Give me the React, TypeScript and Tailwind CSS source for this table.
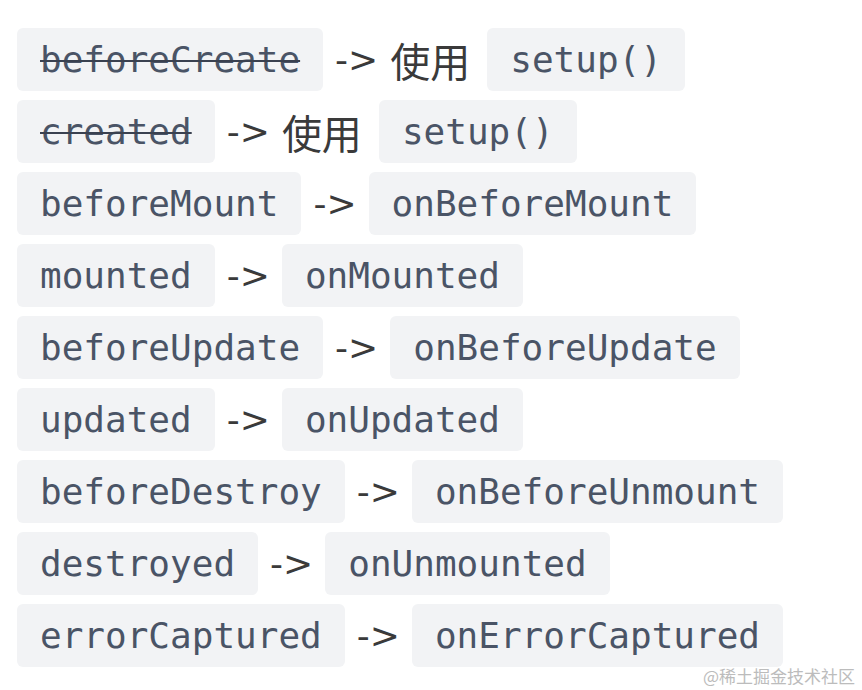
const mono = "font-['DejaVu_Sans_Mono',monospace]"

function Code({ children, strike }: { children: string; strike?: boolean }) {
  return (
    <span
      className={`${mono} inline-flex h-[63px] items-center rounded-md bg-[#f2f3f5] px-[23px] text-[36px] leading-none text-[#4a5466] ${strike ? 'line-through decoration-[#3a4150] decoration-2' : ''}`}
    >
      {children}
    </span>
  )
}

const rows: [string, string][] = [
  ['beforeMount', 'onBeforeMount'],
  ['mounted', 'onMounted'],
  ['beforeUpdate', 'onBeforeUpdate'],
  ['updated', 'onUpdated'],
  ['beforeDestroy', 'onBeforeUnmount'],
  ['destroyed', 'onUnmounted'],
  ['errorCaptured', 'onErrorCaptured'],
]

function Arrow() {
  return (
    <span className="px-[12px] font-['DejaVu_Sans',sans-serif] text-[36px] leading-none text-[#3a3a3a]">
      -&gt;
    </span>
  )
}

export default function App() {
  return (
    <div className="relative h-[690px] w-[862px] overflow-hidden bg-white">
      <div className="flex flex-col gap-[9px] pl-[17px] pt-[28px]">
        {['beforeCreate', 'created'].map(name => (
          <div key={name} className="flex items-center">
            <Code strike>{name}</Code>
            <Arrow />
            <span className="mr-[17px] font-['Noto_Sans_CJK_SC',sans-serif] text-[40px] leading-none text-[#3a3a3a]">
              使用
            </span>
            <Code>setup()</Code>
          </div>
        ))}
        {rows.map(([from, to]) => (
          <div key={from} className="flex items-center">
            <Code>{from}</Code>
            <Arrow />
            <Code>{to}</Code>
          </div>
        ))}
      </div>
      <span className="absolute right-[7px] bottom-[6px] font-['Noto_Sans_CJK_SC',sans-serif] text-[17px] leading-none text-[#bcbcbc]">
        @稀土掘金技术社区
      </span>
    </div>
  )
}
